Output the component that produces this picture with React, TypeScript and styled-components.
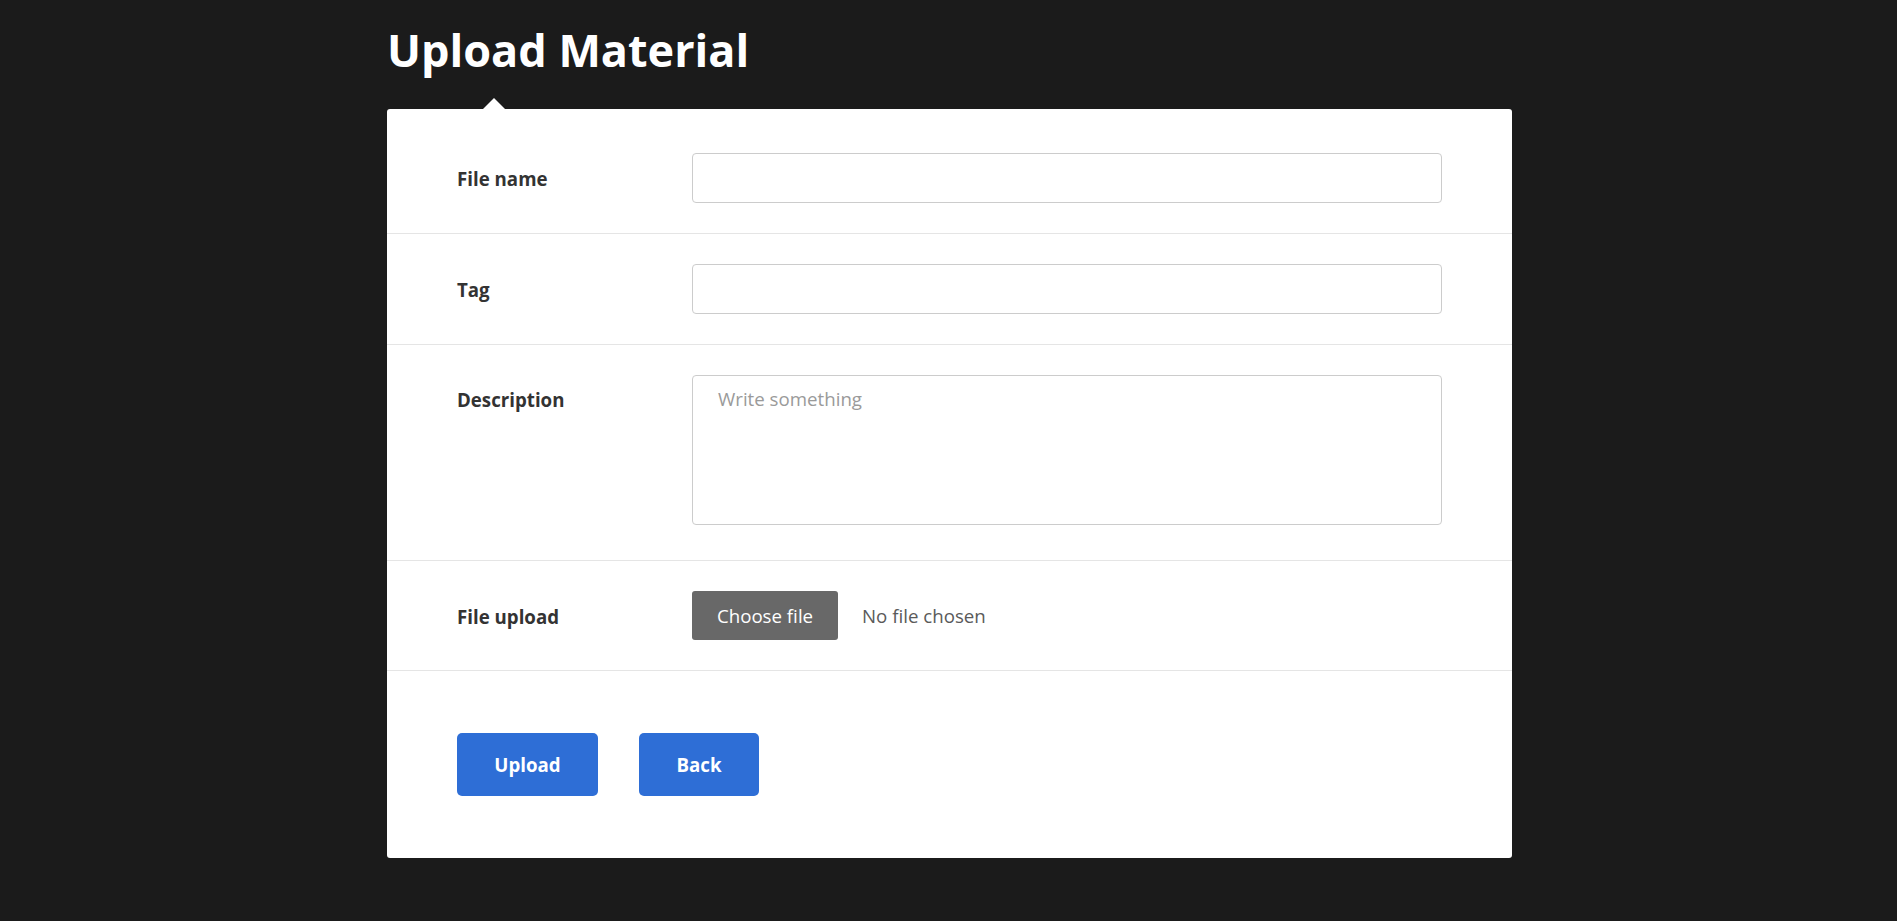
import React from "react";
import styled, { createGlobalStyle } from "styled-components";

const GlobalStyle = createGlobalStyle`
  html, body {
    margin: 0;
    padding: 0;
    background: #1b1b1b;
  }
  body {
    font-family: "Open Sans", "Liberation Sans", sans-serif;
  }
  * {
    box-sizing: border-box;
  }
`;

type Field = {
  label: string;
  kind: "input" | "textarea" | "file";
};

const fields: Field[] = [
  { label: "File name", kind: "input" },
  { label: "Tag", kind: "input" },
  { label: "Description", kind: "textarea" },
  { label: "File upload", kind: "file" },
];

export default function App() {
  return (
    <>
      <GlobalStyle />
      <Page>
        <Title>Upload Material</Title>
        <Card onSubmit={(e) => e.preventDefault()}>
          {fields.map((field) => (
            <Row key={field.label} top={field.kind === "textarea"}>
              <Label top={field.kind === "textarea"}>{field.label}</Label>
              {field.kind === "input" && <TextInput type="text" />}
              {field.kind === "textarea" && (
                <TextArea placeholder="Write something" />
              )}
              {field.kind === "file" && (
                <FileBox>
                  <ChooseButton type="button">Choose file</ChooseButton>
                  <FileHint>No file chosen</FileHint>
                </FileBox>
              )}
            </Row>
          ))}
          <Actions>
            <ActionButton type="submit" width="141px">
              Upload
            </ActionButton>
            <ActionButton type="button" width="120px">
              Back
            </ActionButton>
          </Actions>
        </Card>
      </Page>
    </>
  );
}

const Page = styled.div`
  width: 1125px;
  margin-left: 387px;
  padding-top: 18px;
  padding-bottom: 62px;
`;

const Title = styled.h1`
  margin: 0 0 28px;
  color: #ffffff;
  font-size: 45px;
  line-height: 63px;
  font-weight: 700;
`;

const Card = styled.form`
  position: relative;
  background: #ffffff;
  border-radius: 3px;
  padding-top: 14px;

  &::before {
    content: "";
    position: absolute;
    top: -11px;
    left: 96px;
    border-left: 11px solid transparent;
    border-right: 11px solid transparent;
    border-bottom: 11px solid #ffffff;
  }
`;

const Row = styled.div<{ top?: boolean }>`
  display: grid;
  grid-template-columns: 235px 750px;
  align-items: ${(p) => (p.top ? "start" : "center")};
  padding: 30px 70px;
  border-bottom: 1px solid #e5e5e5;
  padding-bottom: ${(p) => (p.top ? "35px" : "30px")};
`;

const Label = styled.label<{ top?: boolean }>`
  color: #333333;
  font-size: 18.7px;
  font-weight: 700;
  margin-top: ${(p) => (p.top ? "12px" : "1px")};
`;

const TextInput = styled.input`
  display: block;
  width: 750px;
  height: 50px;
  border: 1px solid #cccccc;
  border-radius: 4px;
  padding: 0 24px;
  font-family: inherit;
  font-size: 18.7px;
  outline: none;
`;

const TextArea = styled.textarea`
  display: block;
  width: 750px;
  height: 150px;
  border: 1px solid #cccccc;
  border-radius: 4px;
  padding: 10px 25px;
  font-family: inherit;
  font-size: 18.7px;
  line-height: 25px;
  resize: none;
  outline: none;

  &::placeholder {
    color: #9a9a9a;
  }
`;

const FileBox = styled.div`
  display: flex;
  align-items: center;
  gap: 24px;
`;

const ChooseButton = styled.button`
  height: 49px;
  width: 146px;
  border: none;
  border-radius: 3px;
  background: #686868;
  color: #ffffff;
  font-family: inherit;
  font-size: 18.7px;
  cursor: pointer;
`;

const FileHint = styled.span`
  color: #5a5a5a;
  font-size: 18.7px;
`;

const Actions = styled.div`
  display: flex;
  gap: 41px;
  padding: 62px 70px;
`;

const ActionButton = styled.button<{ width: string }>`
  width: ${(p) => p.width};
  height: 63px;
  border: none;
  border-radius: 5px;
  background: #2e6ed6;
  color: #ffffff;
  font-family: inherit;
  font-size: 18.7px;
  font-weight: 700;
  cursor: pointer;
`;
